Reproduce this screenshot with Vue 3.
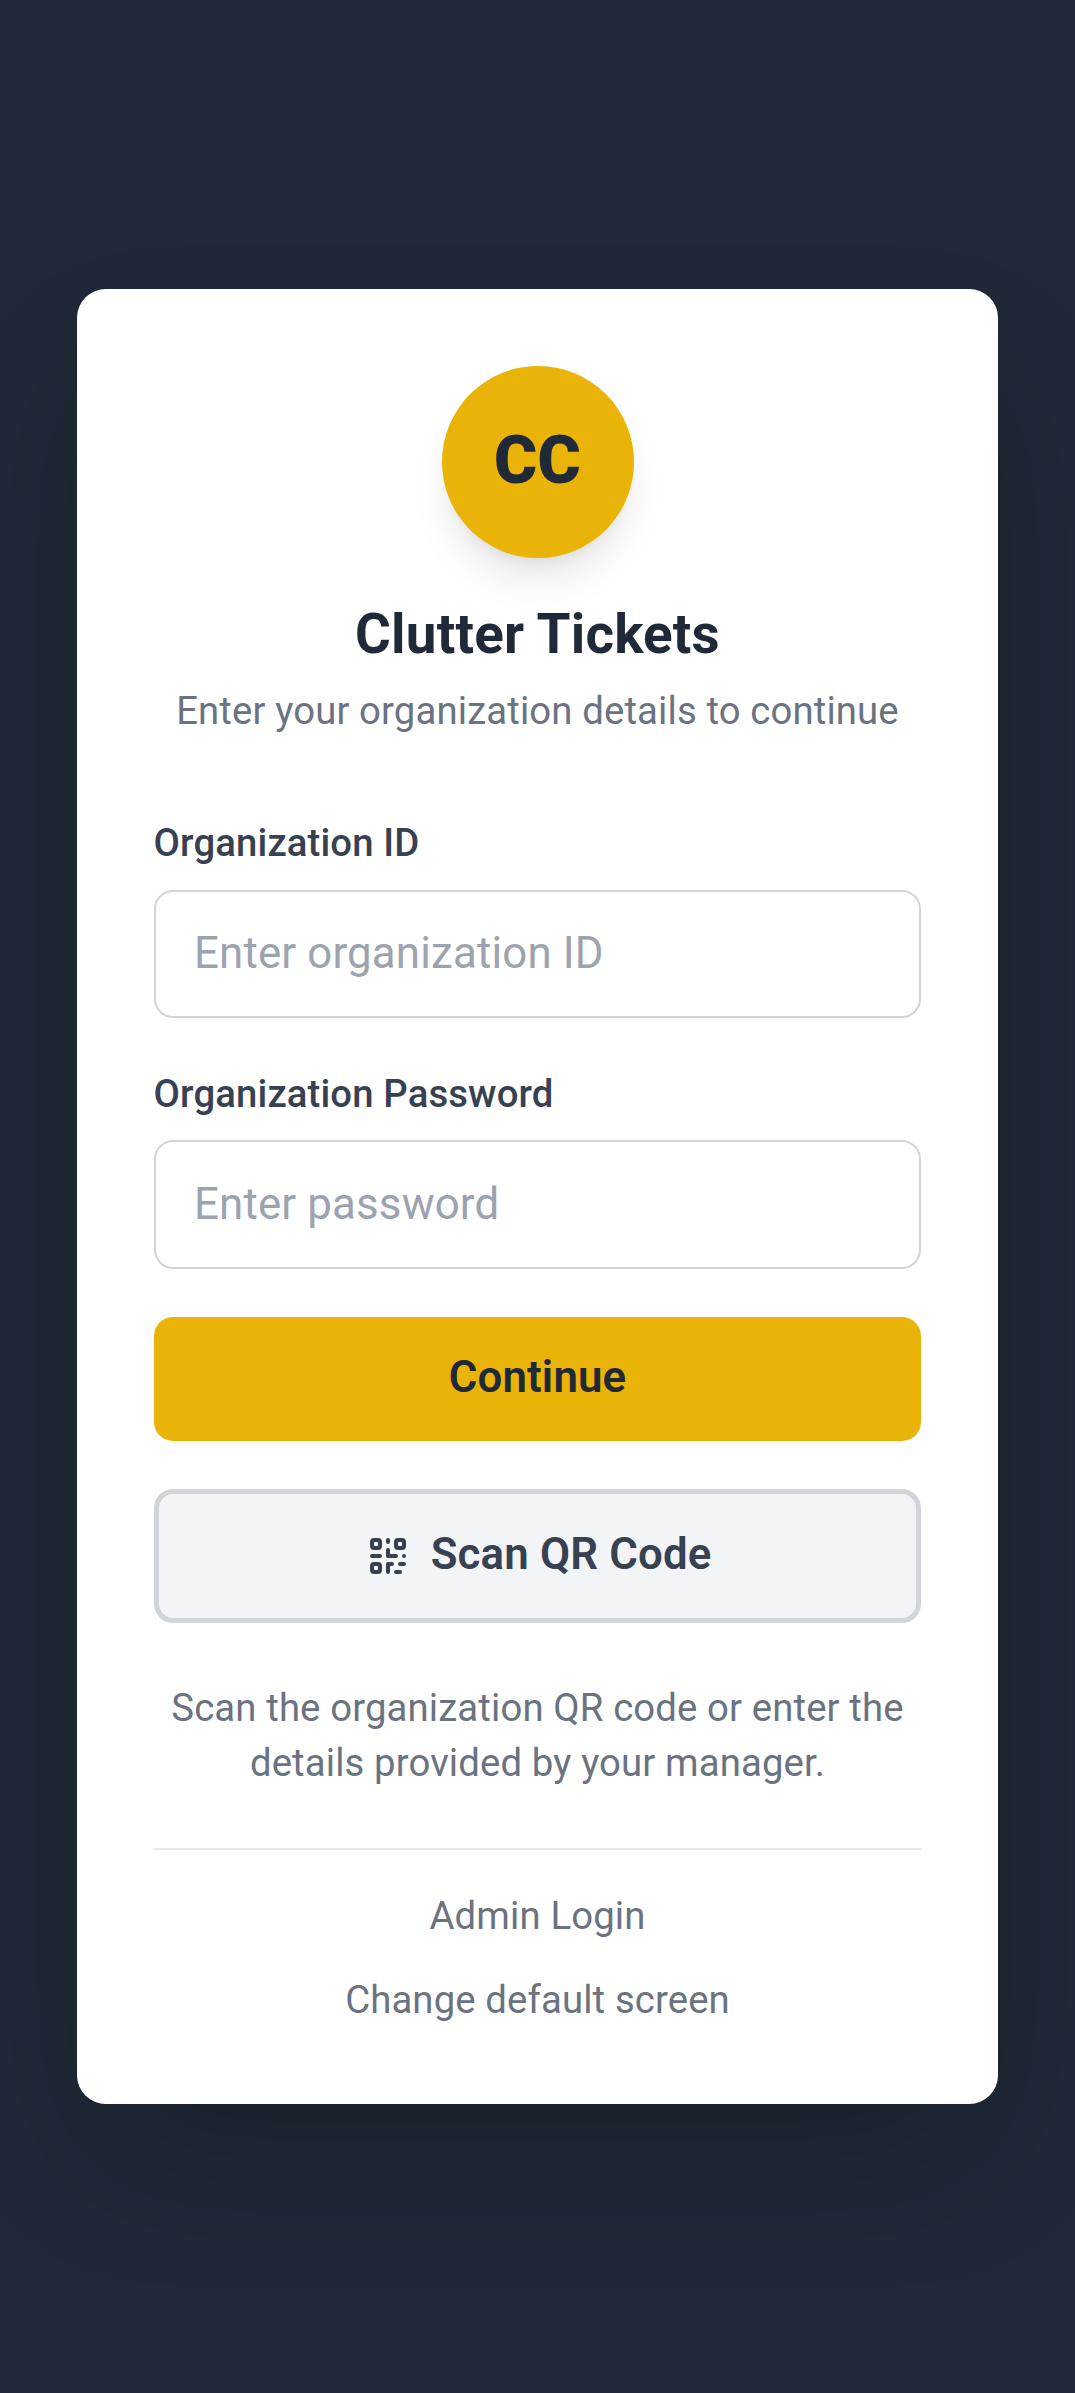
<template>
  <div class="page">
    <main class="card">
      <header class="header">
        <div class="logo">CC</div>
        <h1 class="title">Clutter Tickets</h1>
        <p class="subtitle">Enter your organization details to continue</p>
      </header>

      <form class="form" @submit.prevent>
        <div v-for="field in fields" :key="field.id" class="field">
          <label class="label" :for="field.id">{{ field.label }}</label>
          <input
            :id="field.id"
            v-model="form[field.id]"
            class="input"
            :type="field.type"
            :placeholder="field.placeholder"
          />
        </div>

        <button type="submit" class="btn btn-primary">
          <span class="btn-text">Continue</span>
        </button>

        <button type="button" class="btn btn-secondary">
          <svg class="icon" viewBox="0 0 24 24" fill="none" stroke="currentColor" stroke-width="2" stroke-linecap="round" stroke-linejoin="round">
            <path d="M12 4v1m6 11h2m-6 0h-2v4m0-11v3m0 0h.01M12 12h4.01M16 20h2M4 12h4m12 0h.01M5 8h2a1 1 0 001-1V5a1 1 0 00-1-1H5a1 1 0 00-1 1v2a1 1 0 001 1zm12 0h2a1 1 0 001-1V5a1 1 0 00-1-1h-2a1 1 0 00-1 1v2a1 1 0 001 1zM5 20h2a1 1 0 001-1v-2a1 1 0 00-1-1H5a1 1 0 00-1 1v2a1 1 0 001 1z" />
          </svg>
          <span class="btn-text">Scan QR Code</span>
        </button>
      </form>

      <p class="help">Scan the organization QR code or enter the details provided by your manager.</p>

      <footer class="footer">
        <a class="link">Admin Login</a>
        <a class="link">Change default screen</a>
      </footer>
    </main>
  </div>
</template>

<script setup>
import { reactive } from 'vue'

const fields = [
  { id: 'orgId', label: 'Organization ID', type: 'text', placeholder: 'Enter organization ID' },
  { id: 'orgPassword', label: 'Organization Password', type: 'password', placeholder: 'Enter password' }
]

const form = reactive({
  orgId: '',
  orgPassword: ''
})
</script>

<style>
body {
  margin: 0;
  background: #1f2937;
}
</style>

<style scoped>
.page {
  box-sizing: border-box;
  min-height: 100vh;
  padding: 76.8px;
  display: flex;
  align-items: center;
  justify-content: center;
  overflow: hidden;
  background: #1f2937;
  font-family: Roboto, "Liberation Sans", sans-serif;
  font-size: 38.3px;
  line-height: 55px;
  letter-spacing: 0.13px;
}

.card {
  box-sizing: border-box;
  width: 100%;
  padding: 76.8px;
  border-radius: 28.8px;
  background: #fff;
  box-shadow: 0 68.6px 137px -33px rgba(0, 0, 0, 0.25);
}

.header {
  display: flex;
  flex-direction: column;
  align-items: center;
  margin-bottom: 77.8px;
  text-align: center;
}

.logo {
  box-sizing: border-box;
  display: flex;
  align-items: center;
  justify-content: center;
  width: 192px;
  height: 192px;
  margin-bottom: 38.4px;
  padding-bottom: 4px;
  border-radius: 50%;
  background: #eab308;
  color: #1f2937;
  font-size: 66px;
  font-weight: 900;
  box-shadow: 0 27.4px 41px -8.2px rgba(0, 0, 0, 0.1), 0 11px 16.5px -11px rgba(0, 0, 0, 0.1);
}

.title {
  margin: 0 0 9.4px;
  color: #1f2937;
  font-size: 54.8px;
  font-weight: 700;
  line-height: 76.8px;
  letter-spacing: 0.19px;
}

.subtitle {
  margin: 0;
  color: #6b7280;
}

.form {
  display: flex;
  flex-direction: column;
  gap: 48px;
}

.field {
  display: flex;
  flex-direction: column;
  gap: 19.2px;
}

.label {
  color: #374151;
  font-weight: 500;
}

.input {
  box-sizing: border-box;
  width: 100%;
  height: 128.4px;
  padding: 0 38.4px 1px;
  border: 2px solid #d1d5db;
  border-radius: 19.2px;
  outline: none;
  background: #fff;
  color: #1f2937;
  font-family: inherit;
  font-size: 43.8px;
  letter-spacing: 0.17px;
}

.input::placeholder {
  color: #9ca3af;
}

.btn {
  box-sizing: border-box;
  display: flex;
  align-items: center;
  justify-content: center;
  width: 100%;
  padding: 0;
  border: none;
  border-radius: 19.2px;
  font-family: inherit;
  font-size: 43.8px;
  font-weight: 600;
  letter-spacing: 0.15px;
  cursor: pointer;
}

.btn-text {
  padding-bottom: 3px;
}

.btn-primary {
  height: 124px;
  background: #eab308;
  color: #1f2937;
}

.btn-secondary {
  gap: 19.2px;
  height: 134px;
  border: 5px solid #d1d5db;
  background: #f3f4f6;
  color: #374151;
}

.icon {
  width: 48px;
  height: 48px;
}

.help {
  margin: 57.6px 0;
  color: #6b7280;
  text-align: center;
}

.footer {
  display: flex;
  flex-direction: column;
  align-items: center;
  gap: 28.8px;
  padding-top: 38.4px;
  border-top: 2px solid #e5e7eb;
}

.link {
  color: #6b7280;
  cursor: pointer;
}
</style>
